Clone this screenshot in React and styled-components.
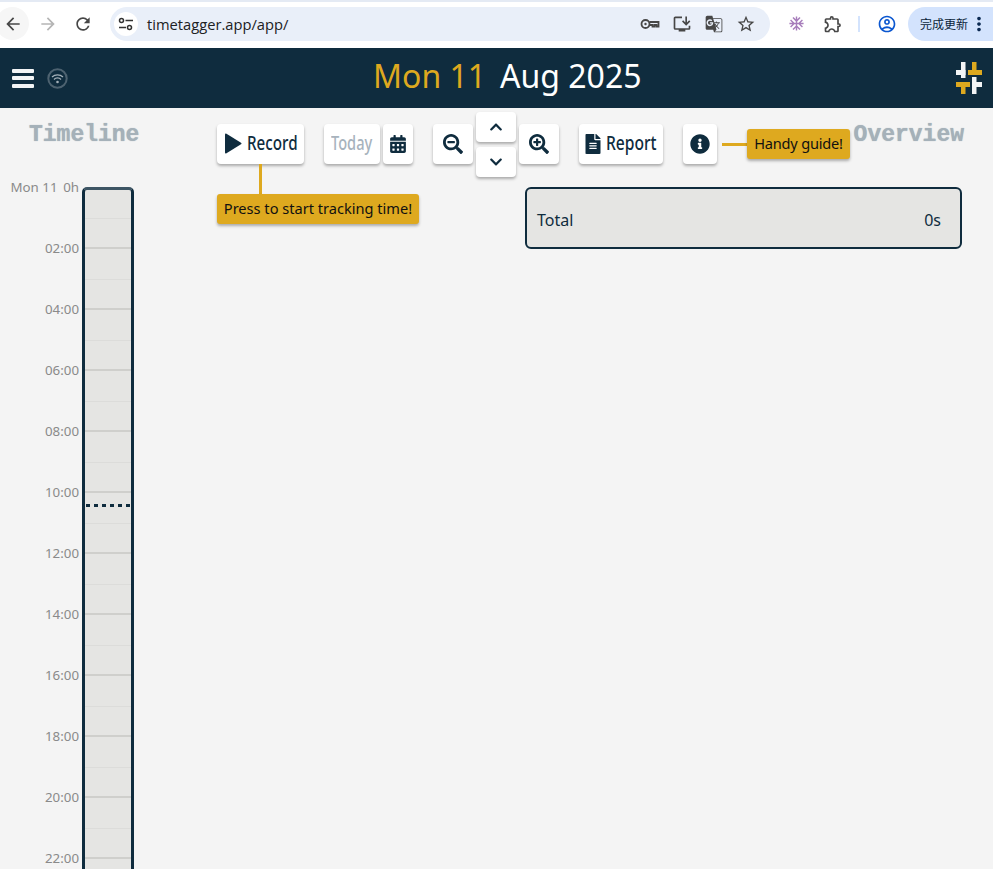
import React from "react";
import styled, { createGlobalStyle } from "styled-components";
import {
  FaCalendarAlt, FaSearchMinus, FaSearchPlus, FaChevronUp, FaChevronDown, FaFileAlt, FaInfoCircle,
} from "react-icons/fa";
import {
  MdArrowBack, MdArrowForward, MdRefresh, MdOutlineStarBorder, MdOutlineExtension, MdOutlineAccountCircle,
  MdMoreVert, MdAcUnit, MdOutlineInstallDesktop, MdOutlineGTranslate,
} from "react-icons/md";

const NAVY = "#0f2c3e";
const GOLD = "#dea91f";

const Global = createGlobalStyle`
  html, body { margin: 0; padding: 0; height: 869px; overflow: hidden; background: #f4f4f4; }
  * { box-sizing: border-box; }
`;

const Page = styled.div`
  height: 869px; overflow: hidden; display: flex; flex-direction: column;
  font-family: "Noto Sans", sans-serif; color: ${NAVY};
`;

const BrowserBar = styled.div`
  height: 48px; flex: none; background: #fff; border-top: 2px solid #e4eaf4;
  display: flex; align-items: center; padding: 0 0 3px 0; position: relative;
`;
const NavBtn = styled.div`
  width: 33px; height: 33px; margin-right: ${(p) => p.$mr || 0}px; margin-left: ${(p) => p.$ml || 0}px; flex: none; border-radius: 50%;
  background: ${(p) => (p.$active ? "#f6f6f6" : "transparent")};
  display: flex; align-items: center; justify-content: center;
  color: ${(p) => p.$color || "#474747"}; font-size: 20px;
`;
const Omnibox = styled.div`
  width: 660px; height: 34px; margin-left: 11px; border-radius: 17px; background: #e9eff9; flex: none;
  display: flex; align-items: center; padding: 0 8px 0 4px;
`;
const SiteIcon = styled.div`
  width: 24px; height: 24px; border-radius: 50%; background: #fff;
  display: flex; align-items: center; justify-content: center; flex: none;
`;
const Url = styled.div`
  margin-left: 9px; flex: 1; font: 400 14.7px "Open Sans", sans-serif; color: #202124;
`;
const OmniIcon = styled.div`
  width: 32px; display: flex; justify-content: center; color: #474747; font-size: 20px;
`;
const ExtIcon = styled.div`
  display: flex; align-items: center; justify-content: center; flex: none; width: ${(p) => p.$w}px;
  margin-left: ${(p) => p.$ml || 0}px; padding-left: ${(p) => p.$pl || 0}px;
  color: ${(p) => p.$color || "#474747"}; font-size: ${(p) => p.$size || 20}px;
`;
const Divider = styled.div`
  width: 2px; height: 16px; margin-left: 1px; background: #d3e3fd; flex: none;
`;
const UpdatePill = styled.div`
  margin-left: auto; width: 85px; height: 34px; border-radius: 17px 0 0 17px; background: #d3e3fd; flex: none;
  display: flex; align-items: center; padding-left: 12px; color: #0b1f3a;
  font: 400 12px "Noto Sans CJK SC", sans-serif;
`;
const PillDots = styled.span`
  display: flex; font-size: 22px; color: #0b2a52;
`;

const Header = styled.header`
  height: 60px; flex: none; background: ${NAVY}; display: grid; grid-template-columns: 361px 1fr auto; align-items: center; padding: 0 11px 0 12px;
`;
const HeaderLeft = styled.div`
  display: flex; align-items: center; gap: 13px;
`;
const Burger = styled.div`
  width: 22px; height: 19px; display: flex; flex-direction: column; justify-content: space-between;
`;
const BurgerBar = styled.span`
  display: block; height: 4px; background: #f2f4f5; border-radius: 1px;
`;
const Title = styled.h1`
  margin: 0; font: 400 32px "Noto Sans", sans-serif; color: #fff; display: flex; gap: 14px; line-height: 60px; position: relative; top: -2px;
`;
const TitleDay = styled.span`
  color: ${GOLD};
`;
const Logo = styled.svg`
  display: block;
`;

const Main = styled.main`
  flex: 1; display: flex; min-height: 0;
`;
const TimelineCol = styled.section`
  width: 216px; flex: none; display: flex; flex-direction: column; padding-top: 14px;
`;
const Heading = styled.div`
  font: 700 23px "Liberation Mono", monospace; color: #a5b1b9; line-height: 26px; text-shadow: 0 0 1px #a5b1b9;
`;
const TimelineHeading = styled(Heading)`
  margin-left: 29px; margin-bottom: 39px;
`;
const TimelineBody = styled.div`
  display: flex; align-items: flex-start; position: relative;
`;
const Labels = styled.div`
  width: 79px; margin-right: 3px; flex: none; margin-top: -30px; display: flex; flex-direction: column;
`;
const Label = styled.div`
  height: 61px; text-align: right; font: 400 13.3px/61px "Noto Sans", sans-serif; color: #8a8a8a; white-space: pre;
`;
const Track = styled.div`
  width: 52px; height: 740px; flex: none; border: 3px solid ${NAVY}; border-top-color: #3d5564; border-radius: 5px; background: #e5e5e3; overflow: hidden; position: relative;
`;
const HourBlock = styled.div`
  height: 61px; border-bottom: 2px solid #cfcfcc; position: relative;
  margin-top: ${(p) => (p.$first ? "-2px" : "0")};
  background: linear-gradient(#dcdcda, #dcdcda) left 30px / 100% 1px no-repeat;
`;
const NowLine = styled.div`
  position: absolute; left: 1px; right: 0; top: 314px; height: 3px;
  background: repeating-linear-gradient(90deg, ${NAVY} 0 4px, transparent 4px 8px);
`;

const Content = styled.section`
  flex: 1; min-width: 0; display: flex; flex-direction: column; padding: 3px 29px 0 1px;
`;
const Toolbar = styled.div`
  display: flex; align-items: center; height: 65px;
`;
const Button = styled.button`
  position: relative; height: ${(p) => p.$h || 40}px; width: ${(p) => p.$w}px; flex: none; border: 0; border-radius: 4px; padding: 0;
  margin-left: ${(p) => p.$ml || 0}px; background: #fff; box-shadow: 0 2px 3px rgba(0,0,0,0.3);
  display: flex; align-items: center; justify-content: center; gap: ${(p) => p.$gap || 0}px;
  color: ${NAVY}; font-size: ${(p) => p.$icon || 18}px;
  & > svg { flex: none; }
`;
/* The reference uses a condensed face; none is installed, so the text is narrowed. */
const ButtonText = styled.span`
  display: block; width: ${(p) => p.$w}px; flex: none; white-space: nowrap; transform-origin: left center;
  margin-bottom: 2px; transform: scaleX(${(p) => p.$sx}); font: 500 20px "Noto Sans", sans-serif;
  color: ${(p) => (p.$muted ? "#a7b3bd" : NAVY)};
`;
const ArrowStack = styled.div`
  display: flex; flex-direction: column; gap: 5px; margin-left: 3px; flex: none; position: relative; top: 0.5px;
`;
const Tip = styled.div`
  position: absolute; background: ${GOLD}; color: #111; border-radius: 3px; height: 30px; white-space: nowrap;
  box-shadow: 0 2px 3px rgba(0,0,0,0.3); font: 400 14.6px/29px "Noto Sans", sans-serif; text-align: center; z-index: 2;
`;
const RecordTip = styled(Tip)`
  left: 0; top: 70px; width: 202px;
`;
const GuideTip = styled(Tip)`
  left: 64px; top: 5px; width: 103px; letter-spacing: -0.2px;
`;
const StemV = styled.span`
  position: absolute; left: 42px; top: 40px; width: 3px; height: 30px; background: ${GOLD};
`;
const StemH = styled.span`
  position: absolute; left: 39px; top: 19px; width: 25px; height: 3px; background: ${GOLD};
`;
const OverviewHeading = styled(Heading)`
  margin-left: auto; margin-bottom: 18px;
`;
const TotalCard = styled.div`
  margin-top: 11px; margin-left: 308px; width: 437px; height: 62px; border: 2px solid ${NAVY}; border-radius: 6px; background: #e5e5e3;
  display: flex; align-items: center; justify-content: space-between; padding: 3px 19px 0 10px; font: 400 16px "Noto Sans", sans-serif; color: ${NAVY};
`;

const hours = ["Mon 11 \u20090h", "02:00", "04:00", "06:00", "08:00", "10:00", "12:00", "14:00", "16:00", "18:00", "20:00", "22:00"];

const TuneIcon = () => (
  <svg width="16" height="14" viewBox="0 0 16 14" fill="none" stroke="#333" strokeWidth="1.5">
    <circle cx="3.5" cy="3.5" r="2" />
    <path d="M7.5 3.5H15M1 10.5h7" />
    <circle cx="11.5" cy="10.5" r="2" />
  </svg>
);

const KeyIcon = () => (
  <svg width="20" height="20" viewBox="0 0 20 20" fill="none" stroke="#474747" strokeWidth="1.8">
    <circle cx="5.5" cy="10" r="4" />
    <circle cx="5.5" cy="10" r="1.2" fill="#474747" stroke="none" />
    <path d="M9.5 8h9v4.5h-2V11h-2v1.5h-2V11h-3" />
  </svg>
);

const PlayIcon = () => (
  <svg width="18" height="21" viewBox="0 0 18 21">
    <path d="M1 1.5v18a1 1 0 0 0 1.5.8l14.5-9a1 1 0 0 0 0-1.6L2.5.7A1 1 0 0 0 1 1.5z" fill={NAVY} />
  </svg>
);

const WifiIcon = () => (
  <svg width="21" height="21" viewBox="0 0 21 21" fill="none">
    <circle cx="10.5" cy="10.5" r="9.2" stroke="#4d6270" strokeWidth="2" />
    <path d="M5 9a8 8 0 0 1 11 0M7 11.5a4.6 4.6 0 0 1 7 0" stroke="#a5b1b9" strokeWidth="1.3" />
    <circle cx="10.5" cy="14" r="1.3" fill="#a5b1b9" />
  </svg>
);

const AppLogo = () => (
  <Logo width="26" height="32" viewBox="0 0 26 32">
    <g fill="#f2f4f5">
      <rect x="5" y="0" width="4.5" height="16" />
      <rect x="0" y="8" width="9.5" height="5" />
      <rect x="16" y="15" width="4.5" height="17" />
      <rect x="16" y="20" width="10" height="5" />
    </g>
    <g fill={GOLD}>
      <rect x="16" y="0" width="4.5" height="9" />
      <rect x="12" y="8" width="14" height="5" />
      <rect x="5" y="20" width="4.5" height="12" />
      <rect x="0" y="20" width="14" height="5" />
    </g>
  </Logo>
);

export default function App() {
  return (
    <Page>
      <Global />
      <BrowserBar>
        <NavBtn $active $ml={-4} $mr={2}><MdArrowBack /></NavBtn>
        <NavBtn $color="#b5b5b5" $mr={2}><MdArrowForward /></NavBtn>
        <NavBtn><MdRefresh /></NavBtn>
        <Omnibox>
          <SiteIcon><TuneIcon /></SiteIcon>
          <Url>timetagger.app/app/</Url>
          <OmniIcon><KeyIcon /></OmniIcon>
          <OmniIcon><MdOutlineInstallDesktop /></OmniIcon>
          <OmniIcon><MdOutlineGTranslate /></OmniIcon>
          <OmniIcon><MdOutlineStarBorder /></OmniIcon>
        </Omnibox>
        <ExtIcon $w={26} $ml={13} $color="#a77dbb" $size={17}><MdAcUnit /></ExtIcon>
        <ExtIcon $w={48}><MdOutlineExtension /></ExtIcon>
        <Divider />
        <ExtIcon $w={48} $pl={5} $color="#0b57d0"><MdOutlineAccountCircle /></ExtIcon>
        <UpdatePill>完成更新<PillDots><MdMoreVert /></PillDots></UpdatePill>
      </BrowserBar>
      <Header>
        <HeaderLeft>
          <Burger><BurgerBar /><BurgerBar /><BurgerBar /></Burger>
          <WifiIcon />
        </HeaderLeft>
        <Title><TitleDay>Mon 11</TitleDay><span>Aug 2025</span></Title>
        <AppLogo />
      </Header>
      <Main>
        <TimelineCol>
          <TimelineHeading>Timeline</TimelineHeading>
          <TimelineBody>
            <Labels>{hours.map((h) => <Label key={h}>{h}</Label>)}</Labels>
            <Track>
              {hours.map((h, i) => <HourBlock key={h} $first={i === 0} />)}
              <NowLine />
            </Track>
          </TimelineBody>
        </TimelineCol>
        <Content>
          <Toolbar>
            <Button $w={87} $gap={5}>
              <PlayIcon /><ButtonText $w={50} $sx={0.76}>Record</ButtonText>
              <StemV /><RecordTip>Press to start tracking time!</RecordTip>
            </Button>
            <Button $w={56} $ml={20}><ButtonText $w={42} $sx={0.73} $muted>Today</ButtonText></Button>
            <Button $w={30} $ml={3}><FaCalendarAlt /></Button>
            <Button $w={40} $ml={20} $icon={20}><FaSearchMinus /></Button>
            <ArrowStack>
              <Button $w={40} $h={30} $icon={14}><FaChevronUp /></Button>
              <Button $w={40} $h={30} $icon={14}><FaChevronDown /></Button>
            </ArrowStack>
            <Button $w={40} $ml={3} $icon={20}><FaSearchPlus /></Button>
            <Button $w={84} $ml={20} $gap={3} $icon={20}><FaFileAlt /><ButtonText $w={53} $sx={0.78}>Report</ButtonText></Button>
            <Button $w={34} $ml={20} $icon={20}>
              <FaInfoCircle />
              <StemH /><GuideTip>Handy guide!</GuideTip>
            </Button>
            <OverviewHeading>Overview</OverviewHeading>
          </Toolbar>
          <TotalCard><span>Total</span><span>0s</span></TotalCard>
        </Content>
      </Main>
    </Page>
  );
}
